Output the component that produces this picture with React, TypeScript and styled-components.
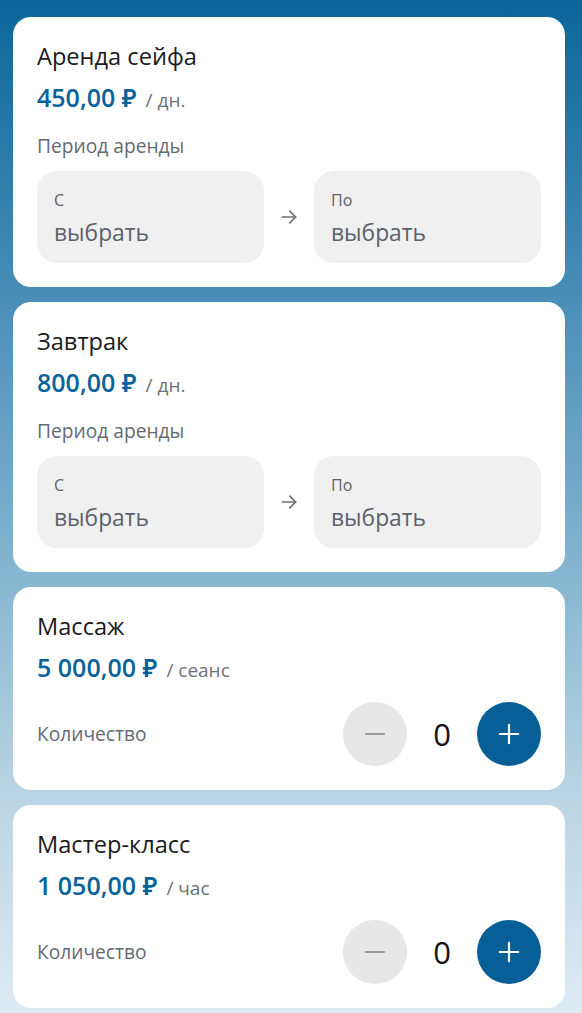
import React, { useState } from "react";
import styled, { createGlobalStyle } from "styled-components";

const GlobalStyle = createGlobalStyle`
  html, body {
    margin: 0;
    padding: 0;
  }
  body {
    font-family: "Open Sans", "Noto Sans", Arial, sans-serif;
    background: #dfeaf2;
  }
  * {
    box-sizing: border-box;
  }
`;

const Page = styled.div`
  min-height: 1013px;
  padding: 17px 17px 8px 13px;
  display: flex;
  flex-direction: column;
  gap: 15px;
  background: linear-gradient(180deg, #0a6699 0%, #4b8fb8 30%, #8ab8d1 58%, #b9d4e4 78%, #deebf3 100%);
`;

const Card = styled.div`
  background: #fff;
  border-radius: 18px;
  padding: 24px 24px 24px;
`;

const Title = styled.div`
  font-size: 23.6px;
  line-height: 30px;
  color: #1b1b1b;
`;

const PriceRow = styled.div`
  margin-top: 10px;
  display: flex;
  align-items: baseline;
  gap: 9px;
`;

const Price = styled.span`
  font-size: 25px;
  line-height: 32px;
  font-weight: 600;
  color: #07639a;
`;

const Unit = styled.span`
  font-size: 19px;
  color: #6b7079;
`;

const Label = styled.div`
  font-size: 19.2px;
  line-height: 26px;
  color: #646a73;
`;

const PeriodLabel = styled(Label)`
  margin-top: 20px;
`;

const Period = styled.div`
  margin-top: 12px;
  display: grid;
  grid-template-columns: 1fr 50px 1fr;
  align-items: center;
`;

const DateBox = styled.button`
  height: 92px;
  border: none;
  border-radius: 20px;
  background: #f0f0f0;
  padding: 3px 17px 0;
  display: flex;
  flex-direction: column;
  justify-content: center;
  align-items: flex-start;
  font-family: inherit;
  text-align: left;
  cursor: pointer;
`;

const DateCaption = styled.span`
  font-size: 16px;
  line-height: 22px;
  color: #5c626b;
`;

const DateValue = styled.span`
  margin-top: 7px;
  font-size: 22.8px;
  line-height: 30px;
  color: #5c626b;
`;

const ArrowWrap = styled.div`
  display: flex;
  justify-content: center;
  align-items: center;
  color: #6a6f77;
`;

const QtyRow = styled.div`
  margin-top: 19px;
  display: flex;
  align-items: center;
  justify-content: space-between;
`;

const Stepper = styled.div`
  display: flex;
  align-items: center;
`;

const RoundButton = styled.button<{ $primary?: boolean }>`
  width: 64px;
  height: 64px;
  border-radius: 50%;
  border: none;
  padding: 0;
  display: flex;
  align-items: center;
  justify-content: center;
  background: ${({ $primary }) => ($primary ? "#075f98" : "#e7e7e7")};
  color: ${({ $primary }) => ($primary ? "#ffffff" : "#9a9a9a")};
  cursor: pointer;
`;

const Count = styled.span`
  width: 70px;
  text-align: center;
  font-size: 31px;
  color: #141414;
`;

const Arrow = () => (
  <svg width="20" height="20" viewBox="0 0 24 24" fill="none" stroke="currentColor" strokeWidth="2" strokeLinecap="round" strokeLinejoin="round">
    <path d="M4 12h16" />
    <path d="M13 5l7 7-7 7" />
  </svg>
);

const Minus = () => (
  <svg width="22" height="22" viewBox="0 0 24 24" fill="none" stroke="currentColor" strokeWidth="2.2" strokeLinecap="round">
    <path d="M2 12h20" />
  </svg>
);

const Plus = () => (
  <svg width="22" height="22" viewBox="0 0 24 24" fill="none" stroke="currentColor" strokeWidth="2.4" strokeLinecap="round">
    <path d="M2 12h20" />
    <path d="M12 2v20" />
  </svg>
);

type Service = {
  id: string;
  title: string;
  price: string;
  unit: string;
  kind: "period" | "qty";
};

const services: Service[] = [
  { id: "safe", title: "Аренда сейфа", price: "450,00 ₽", unit: "/ дн.", kind: "period" },
  { id: "breakfast", title: "Завтрак", price: "800,00 ₽", unit: "/ дн.", kind: "period" },
  { id: "massage", title: "Массаж", price: "5 000,00 ₽", unit: "/ сеанс", kind: "qty" },
  { id: "class", title: "Мастер-класс", price: "1 050,00 ₽", unit: "/ час", kind: "qty" },
];

const QtyControl: React.FC = () => {
  const [n, setN] = useState(0);
  return (
    <QtyRow>
      <Label>Количество</Label>
      <Stepper>
        <RoundButton onClick={() => setN((v) => Math.max(0, v - 1))}>
          <Minus />
        </RoundButton>
        <Count>{n}</Count>
        <RoundButton $primary onClick={() => setN((v) => v + 1)}>
          <Plus />
        </RoundButton>
      </Stepper>
    </QtyRow>
  );
};

const PeriodControl: React.FC = () => (
  <>
    <PeriodLabel>Период аренды</PeriodLabel>
    <Period>
      <DateBox>
        <DateCaption>С</DateCaption>
        <DateValue>выбрать</DateValue>
      </DateBox>
      <ArrowWrap>
        <Arrow />
      </ArrowWrap>
      <DateBox>
        <DateCaption>По</DateCaption>
        <DateValue>выбрать</DateValue>
      </DateBox>
    </Period>
  </>
);

const App: React.FC = () => (
  <>
    <GlobalStyle />
    <Page>
      {services.map((s) => (
        <Card key={s.id}>
          <Title>{s.title}</Title>
          <PriceRow>
            <Price>{s.price}</Price>
            <Unit>{s.unit}</Unit>
          </PriceRow>
          {s.kind === "period" ? <PeriodControl /> : <QtyControl />}
        </Card>
      ))}
    </Page>
  </>
);

export default App;
